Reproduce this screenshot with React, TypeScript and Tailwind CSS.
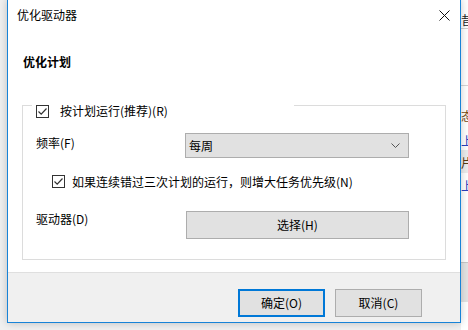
const CheckBox = () => (
  <span className="w-[13px] h-[13px] border border-[#333333] bg-white flex items-center justify-center shrink-0">
    <svg width="11" height="11" viewBox="0 0 11 11" fill="none">
      <path d="M1.5 5.5 L4.2 8.2 L9.5 2.5" stroke="#333333" strokeWidth="1.2" />
    </svg>
  </span>
);

const App = () => {
  return (
    <div className="relative w-[468px] h-[330px] overflow-hidden bg-[#f0f0f0] font-['Noto_Sans_CJK_SC',sans-serif] text-[12px] leading-[16px] text-black">
      {/* window behind the dialog */}
      <div className="absolute left-[461px] top-0 w-[7px] h-[330px] bg-white overflow-hidden">
        <div className="absolute left-0 top-[12px] text-[12px] text-[#222]">昔</div>
        <div className="absolute left-0 top-[28px] w-full h-px bg-[#cfcfcf]" />
        <div className="absolute left-0 top-[85px] w-full h-px bg-[#d5d5d5]" />
        <div className="absolute left-0 top-[108px] text-[12px] text-[#7a4a10]">态</div>
        <div className="absolute left-0 top-[133px] text-[12px] text-[#2a3fbf]">上</div>
        <div className="absolute left-0 top-[150px] w-full h-[23px] bg-[#ececec]" />
        <div className="absolute left-0 top-[155px] text-[12px] text-[#5a3a10]">片</div>
        <div className="absolute left-0 top-[178px] text-[12px] text-[#2a3fbf]">上</div>
        <div className="absolute left-0 top-[262px] w-full h-[40px] bg-[#e4e4e4] border-t border-[#c8c8c8]" />
      </div>

      {/* dialog window */}
      <div className="absolute left-[7px] top-[-1px] w-[454px] h-[324px] border border-[#1883d7] bg-white flex flex-col shadow-[0_0_8px_rgba(0,0,0,0.22)]">
        <div className="h-[30px] flex items-center justify-between pl-[9px] pr-[9px] shrink-0">
          <span>优化驱动器</span>
          <svg width="11" height="11" viewBox="0 0 11 11" className="mr-[1px]">
            <path d="M0.5 0.5 L10.5 10.5 M10.5 0.5 L0.5 10.5" stroke="#111" strokeWidth="1" />
          </svg>
        </div>

        <div className="flex-1 flex flex-col pt-[24px]">
          <div className="pl-[15px] font-bold">优化计划</div>

          <div className="relative ml-[14px] mt-[35px] w-[424px] h-[155px] border border-[#dcdcdc] pt-[27px] pl-[13px] pr-[36px]">
            <div className="absolute left-[9px] top-[-3px] w-[262px] bg-white flex items-center gap-[11px] pl-[4px]">
              <CheckBox />
              <span>按计划运行(推荐)(R)</span>
            </div>

            <div className="flex items-start justify-between">
              <span className="mt-[2px]">频率(F)</span>
              <div className="w-[224px] h-[25px] bg-[#e1e1e1] border border-[#adadad] flex items-center justify-between pl-[3px] pr-[8px]">
                <span>每周</span>
                <svg width="9" height="5" viewBox="0 0 9 5">
                  <path d="M0.5 0.5 L4.5 4.5 L8.5 0.5" stroke="#555" fill="none" strokeWidth="1" />
                </svg>
              </div>
            </div>

            <div className="mt-[17px] ml-[16px] flex items-center gap-[7px] h-[13px]">
              <CheckBox />
              <span>如果连续错过三次计划的运行，则增大任务优先级(N)</span>
            </div>

            <div className="mt-[23px] flex items-start justify-between">
              <span>驱动器(D)</span>
              <div className="w-[223px] h-[28px] bg-[#e1e1e1] border border-[#adadad] flex items-center justify-center">
                选择(H)
              </div>
            </div>
          </div>
        </div>

        <div className="h-[50px] shrink-0 bg-[#f0f0f0] border-t border-[#dfdfdf] flex justify-end items-start gap-[10px] pt-[16px] pr-[38px]">
          <div className="w-[87px] h-[28px] bg-[#e1e1e1] border-2 border-[#0078d7] flex items-center justify-center">
            确定(O)
          </div>
          <div className="w-[87px] h-[28px] bg-[#e1e1e1] border border-[#adadad] flex items-center justify-center">
            取消(C)
          </div>
        </div>
      </div>
    </div>
  );
};

export default App;
